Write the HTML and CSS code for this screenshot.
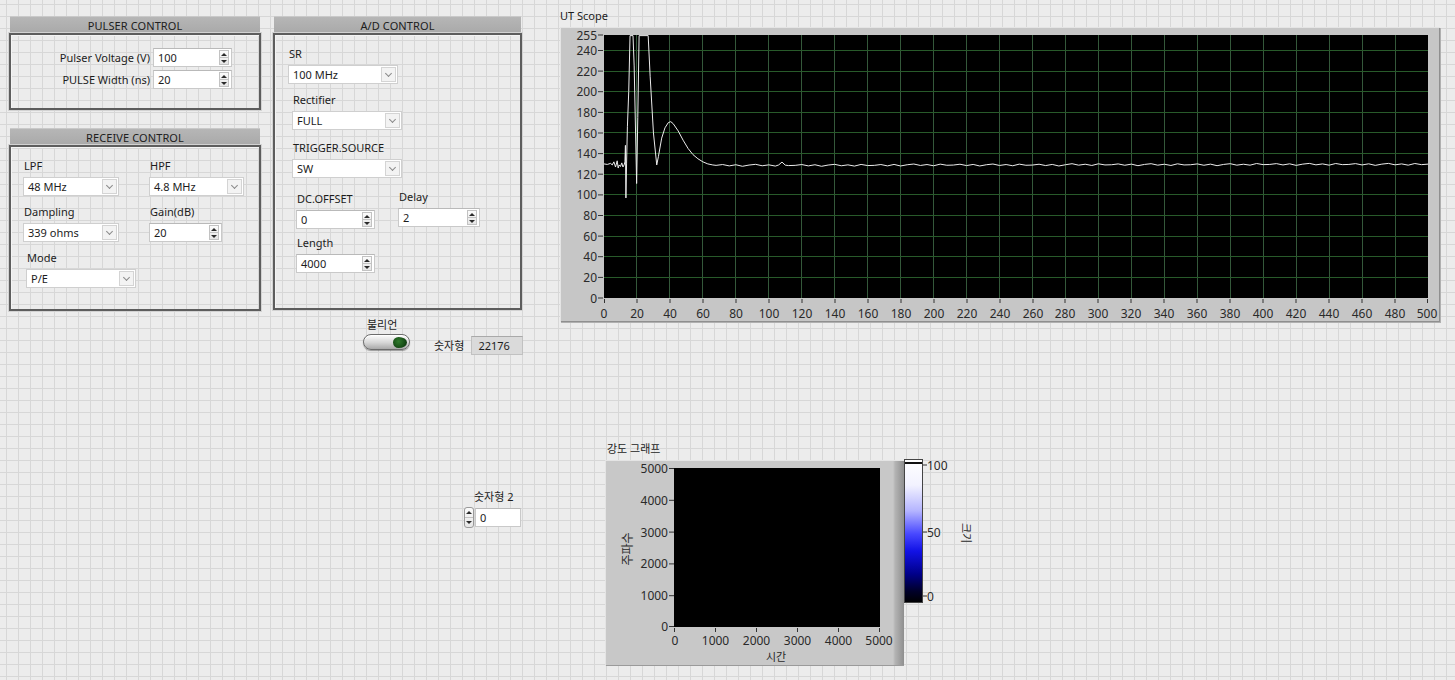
FILE: index.html
```html
<!DOCTYPE html>
<html lang="ko">
<head>
<meta charset="utf-8">
<title>UT Front Panel</title>
<link rel="stylesheet" href="styles.css">
</head>
<body>
<main class="panel">

  <section class="cluster pulser">
    <div class="cluster-title">PULSER CONTROL</div>
    <div class="cluster-body pulser-body">
      <span class="lbl right">Pulser Voltage (V)</span>
      <div class="num w79"><span class="val">100</span><span class="spin"><i class="up"></i><i class="dn"></i></span></div>
      <span class="lbl right">PULSE Width (ns)</span>
      <div class="num w79"><span class="val">20</span><span class="spin"><i class="up"></i><i class="dn"></i></span></div>
    </div>
  </section>

  <section class="cluster receive">
    <div class="cluster-title">RECEIVE CONTROL</div>
    <div class="cluster-body receive-body">
      <div class="field">
        <span class="lbl">LPF</span>
        <div class="ring w96"><span class="val">48 MHz</span><span class="arrow"></span></div>
      </div>
      <div class="field">
        <span class="lbl">HPF</span>
        <div class="ring w95"><span class="val">4.8 MHz</span><span class="arrow"></span></div>
      </div>
      <div class="field">
        <span class="lbl">Dampling</span>
        <div class="ring w96"><span class="val">339 ohms</span><span class="arrow"></span></div>
      </div>
      <div class="field">
        <span class="lbl">Gain(dB)</span>
        <div class="num w73"><span class="val">20</span><span class="spin"><i class="up"></i><i class="dn"></i></span></div>
      </div>
      <div class="field mode">
        <span class="lbl">Mode</span>
        <div class="ring w110"><span class="val">P/E</span><span class="arrow"></span></div>
      </div>
    </div>
  </section>

  <section class="cluster adc">
    <div class="cluster-title">A/D CONTROL</div>
    <div class="cluster-body adc-body">
      <div class="field f-sr">
        <span class="lbl">SR</span>
        <div class="ring w110"><span class="val">100 MHz</span><span class="arrow"></span></div>
      </div>
      <div class="field f-rect">
        <span class="lbl">Rectifier</span>
        <div class="ring w110"><span class="val">FULL</span><span class="arrow"></span></div>
      </div>
      <div class="field f-trig">
        <span class="lbl">TRIGGER.SOURCE</span>
        <div class="ring w110"><span class="val">SW</span><span class="arrow"></span></div>
      </div>
      <div class="pair">
        <div class="field">
          <span class="lbl">DC.OFFSET</span>
          <div class="num w79"><span class="val">0</span><span class="spin"><i class="up"></i><i class="dn"></i></span></div>
        </div>
        <div class="field f-delay">
          <span class="lbl">Delay</span>
          <div class="num w82"><span class="val">2</span><span class="spin"><i class="up"></i><i class="dn"></i></span></div>
        </div>
      </div>
      <div class="field f-len">
        <span class="lbl">Length</span>
        <div class="num w79"><span class="val">4000</span><span class="spin"><i class="up"></i><i class="dn"></i></span></div>
      </div>
    </div>
  </section>

  <div class="boolean">
    <span class="lbl">불리언</span>
    <div class="bool-btn"><span class="led"></span></div>
  </div>

  <div class="indicator">
    <span class="lbl">숫자형</span>
    <div class="ind-box">22176</div>
  </div>

  <div class="numeric2">
    <span class="lbl">숫자형 2</span>
    <div class="num2-row">
      <span class="spin spin-left"><i class="up"></i><i class="dn"></i></span>
      <div class="num w46"><span class="val">0</span></div>
    </div>
  </div>

  <section class="scope">
    <div class="graph-title">UT Scope</div>
    <div class="scope-frame">
      <svg class="graph-svg" width="880" height="295" viewBox="0 0 880 295">
        <rect x="44" y="8" width="824" height="263" fill="#000"/>
        <svg x="44" y="8" width="824" height="263" viewBox="0 0 500 255" preserveAspectRatio="none">
          <path class="gridv" vector-effect="non-scaling-stroke" shape-rendering="crispEdges" d="M20 0V255M40 0V255M60 0V255M80 0V255M100 0V255M120 0V255M140 0V255M160 0V255M180 0V255M200 0V255M220 0V255M240 0V255M260 0V255M280 0V255M300 0V255M320 0V255M340 0V255M360 0V255M380 0V255M400 0V255M420 0V255M440 0V255M460 0V255M480 0V255"/>
          <path class="gridh" vector-effect="non-scaling-stroke" shape-rendering="crispEdges" d="M0 235H500M0 215H500M0 195H500M0 175H500M0 155H500M0 135H500M0 115H500M0 95H500M0 75H500M0 55H500M0 35H500M0 15H500"/>
          <polyline class="trace" vector-effect="non-scaling-stroke" points="0,125 2,125.5 4,124.5 5,126 6,123 7,128 8,122 8.6,129 9.2,126 10,127.5 10.8,124 11.5,128 12.2,126 12.7,123 13,107 13.3,158 13.7,125 14.2,89 15,55 15.8,0.6 17.6,0.6 18.3,30 19.8,144 20.5,80 21.3,0.6 26.8,0.6 28,40 30,95 32,126 33,118 35,100 37,90 39,85 40.5,84 42,86 45,93 48,102 51,110 54,116 57,120 60,123 63,125 66,126 68,126.4 72,125.6 76,126.9 80,125.8 84,127.3 88,126.1 92,125.4 96,126.8 100,125.9 104,127.1 106,126 108,123.2 110,126.2 112,126.6 116,126.4 120,125.6 124,126.9 128,125.8 132,127.3 136,126.1 140,125.4 144,126.8 148,125.9 152,127.1 156,125.5 160,126.6 164,126.4 168,125.6 172,126.9 176,125.5 180,127 184,125.8 188,125.1 192,126.5 196,125.6 200,126.8 204,125.2 208,126.3 212,126.1 216,125.3 220,126.6 224,125.5 228,127 232,125.8 236,125.1 240,126.5 244,125.6 248,126.8 252,125.2 256,126.3 260,126.1 264,125.3 268,126.6 272,125.5 276,127 280,125.8 284,124.8 288,126.2 292,125.3 296,126.5 300,124.9 304,126 308,125.8 312,125 316,126.3 320,125.2 324,126.7 328,125.5 332,124.8 336,126.2 340,125.3 344,126.5 348,124.9 352,126 356,125.8 360,125 364,126.3 368,125.2 372,126.7 376,125.5 380,124.8 384,126.2 388,125.3 392,126.2 396,124.6 400,125.7 404,125.5 408,124.7 412,126 416,124.9 420,126.4 424,125.2 428,124.5 432,125.9 436,125 440,126.2 444,124.6 448,125.7 452,125.5 456,124.7 460,126 464,124.9 468,126.4 472,125.2 476,124.5 480,125.9 484,125 488,126.2 492,124.6 496,125.7 500,125.2"/>
        </svg>
        <path class="tick" d="M38 271H43M38 250.4H43M38 229.7H43M38 209.1H43M38 188.5H43M38 167.9H43M38 147.2H43M38 126.6H43M38 106H43M38 85.4H43M38 64.7H43M38 44.1H43M38 23.5H43M38 8H43"/>
        <g class="axis-y">
          <text x="37" y="271">0</text>
          <text x="37" y="250.4">20</text>
          <text x="37" y="229.7">40</text>
          <text x="37" y="209.1">60</text>
          <text x="37" y="188.5">80</text>
          <text x="37" y="167.9">100</text>
          <text x="37" y="147.2">120</text>
          <text x="37" y="126.6">140</text>
          <text x="37" y="106">160</text>
          <text x="37" y="85.4">180</text>
          <text x="37" y="64.7">200</text>
          <text x="37" y="44.1">220</text>
          <text x="37" y="23.5">240</text>
          <text x="37" y="8">255</text>
        </g>
        <path class="tick" d="M44.5 272V276M77 272V276M110 272V276M143 272V276M176 272V276M209 272V276M242 272V276M275 272V276M308 272V276M341 272V276M374 272V276M407 272V276M440 272V276M473 272V276M505 272V276M538 272V276M571 272V276M604 272V276M637 272V276M670 272V276M703 272V276M736 272V276M769 272V276M802 272V276M835 272V276M867.5 272V276"/>
        <g class="axis-x">
          <text x="44" y="286">0</text>
          <text x="77" y="286">20</text>
          <text x="110" y="286">40</text>
          <text x="143" y="286">60</text>
          <text x="176" y="286">80</text>
          <text x="209" y="286">100</text>
          <text x="242" y="286">120</text>
          <text x="275" y="286">140</text>
          <text x="308" y="286">160</text>
          <text x="341" y="286">180</text>
          <text x="374" y="286">200</text>
          <text x="407" y="286">220</text>
          <text x="440" y="286">240</text>
          <text x="473" y="286">260</text>
          <text x="505" y="286">280</text>
          <text x="538" y="286">300</text>
          <text x="571" y="286">320</text>
          <text x="604" y="286">340</text>
          <text x="637" y="286">360</text>
          <text x="670" y="286">380</text>
          <text x="703" y="286">400</text>
          <text x="736" y="286">420</text>
          <text x="769" y="286">440</text>
          <text x="802" y="286">460</text>
          <text x="835" y="286">480</text>
          <text x="867" y="286">500</text>
        </g>
      </svg>
    </div>
  </section>

  <section class="intensity">
    <div class="graph-title">강도 그래프</div>
    <div class="int-row">
      <div class="int-frame">
        <svg class="graph-svg" width="299" height="206" viewBox="0 0 299 206">
          <rect x="69" y="8" width="206" height="159" fill="#000"/>
          <path class="tick" d="M64 8.5H69M64 40.3H69M64 72.1H69M64 103.9H69M64 135.7H69M64 166.5H69"/>
          <g class="axis-y">
            <text x="63" y="8.5">5000</text>
            <text x="63" y="40.3">4000</text>
            <text x="63" y="72.1">3000</text>
            <text x="63" y="103.9">2000</text>
            <text x="63" y="135.7">1000</text>
            <text x="63" y="166.5">0</text>
          </g>
          <path class="tick" d="M69.5 168V172M110.5 168V172M151.5 168V172M192.5 168V172M233.5 168V172M274.5 168V172"/>
          <g class="axis-x">
            <text x="70" y="180">0</text>
            <text x="110.5" y="180">1000</text>
            <text x="151.5" y="180">2000</text>
            <text x="192.5" y="180">3000</text>
            <text x="233.5" y="180">4000</text>
            <text x="274" y="180">5000</text>
          </g>
          <text class="axis-name" x="171" y="196">시간</text>
          <text class="axis-name big" transform="translate(22 89) rotate(-90)">주파수</text>
        </svg>
      </div>
      <svg class="colorscale" width="80" height="156" viewBox="0 0 80 156">
        <defs>
          <linearGradient id="cs" x1="0" y1="0" x2="0" y2="1">
            <stop offset="0" stop-color="#ffffff"/>
            <stop offset="0.18" stop-color="#f2f2ff"/>
            <stop offset="0.36" stop-color="#b4b4ff"/>
            <stop offset="0.52" stop-color="#4848ff"/>
            <stop offset="0.64" stop-color="#1212e6"/>
            <stop offset="0.8" stop-color="#00008a"/>
            <stop offset="0.92" stop-color="#00002a"/>
            <stop offset="1" stop-color="#000000"/>
          </linearGradient>
        </defs>
        <g transform="translate(0 6)">
          <rect x="0.5" y="0.5" width="18" height="143" fill="url(#cs)" stroke="#444"/>
          <rect x="1" y="3" width="17" height="2" fill="#111"/>
          <path class="tick" d="M19 6H23M19 73H23M19 137H23"/>
          <g class="scale-lbl">
            <text x="23" y="6">100</text>
            <text x="23" y="73">50</text>
            <text x="23" y="137">0</text>
          </g>
          <text class="axis-name" transform="translate(62 74) rotate(90)">크기</text>
        </g>
      </svg>
    </div>
  </section>

</main>
</body>
</html>
```

FILE: styles.css
```css
html, body {
  margin: 0;
  padding: 0;
}

body {
  width: 1455px;
  height: 680px;
  overflow: hidden;
  background-color: #ececec;
  background-image:
    linear-gradient(to right, #d7d7d7 1px, transparent 1px),
    linear-gradient(to bottom, #d7d7d7 1px, transparent 1px);
  background-size: 12px 12px;
  background-position: 6px 4px;
  font-family: "Noto Sans", "Noto Sans CJK KR", sans-serif;
  font-size: 11px;
  color: #1c1c1c;
}

.panel {
  position: relative;
  width: 1455px;
  height: 680px;
}

/* ---------- clusters ---------- */
.cluster {
  position: absolute;
  box-sizing: border-box;
}

.pulser  { left: 9px;   top: 16px;  width: 252px; }
.receive { left: 9px;   top: 128px; width: 252px; }
.adc     { left: 273px; top: 16px;  width: 249px; }

.cluster-title {
  height: 17px;
  line-height: 17px;
  margin: 0 1px;
  background: linear-gradient(#b6b6b6, #a9a9a9);
  border-top: 1px solid #c9c9c9;
  box-sizing: border-box;
  text-align: center;
  color: #202020;
  letter-spacing: 0.1px;
}

.cluster-body {
  box-sizing: border-box;
  border: 2px solid #5d5d5d;
  box-shadow: inset 1px 1px 0 #f4f4f4, 0 0 0 1px #d2d2d2;
}

.pulser-body {
  height: 77px;
  display: grid;
  grid-template-columns: 139px 79px;
  grid-auto-rows: 19px;
  column-gap: 3px;
  row-gap: 3px;
  align-items: center;
  padding-top: 13px;
}

.receive-body {
  height: 166px;
  display: grid;
  grid-template-columns: 126px 100px;
  row-gap: 9px;
  align-content: start;
  padding: 12px 0 0 12px;
}

.adc-body {
  height: 277px;
  display: flex;
  flex-direction: column;
  align-items: flex-start;
  padding: 12px 0 0 13px;
}

/* ---------- labels / fields ---------- */
.lbl {
  display: block;
  line-height: 14px;
  white-space: nowrap;
}

.lbl.right {
  text-align: right;
}

.field {
  display: flex;
  flex-direction: column;
  align-items: flex-start;
}

.field .lbl {
  margin-bottom: 4px;
  padding-left: 1px;
}

.receive-body .mode {
  margin-left: 3px;
}

.f-rect { margin-top: 9px;  margin-left: 4px; }
.f-trig { margin-top: 11px; margin-left: 4px; }
.f-len  { margin-top: 7px;  margin-left: 8px; }

.pair {
  display: flex;
  align-items: flex-start;
  gap: 23px;
  margin-top: 14px;
  margin-left: 8px;
}

.f-delay {
  margin-top: -2px;
}

/* ---------- numeric control ---------- */
.num {
  display: flex;
  align-items: center;
  height: 19px;
  box-sizing: border-box;
  background: #ffffff;
  border: 1px solid #c9c9c9;
  border-top-color: #b9b9b9;
}

.num .val,
.ring .val {
  flex: 1;
  padding-left: 4px;
  line-height: 17px;
  white-space: nowrap;
}

.w46  { width: 46px; }
.w73  { width: 73px; }
.w79  { width: 79px; }
.w82  { width: 82px; }
.w95  { width: 95px; }
.w96  { width: 96px; }
.w110 { width: 110px; }

.spin {
  display: flex;
  flex-direction: column;
  width: 10px;
  height: 15px;
  margin-right: 2px;
  box-sizing: border-box;
  border: 1px solid #c2c2c2;
  background: linear-gradient(#fbfbfb, #e6e6e6);
}

.spin i {
  flex: 1;
  display: flex;
  align-items: center;
  justify-content: center;
}

.spin .dn {
  border-top: 1px solid #c2c2c2;
}

.spin i::before {
  content: "";
  border-left: 3px solid transparent;
  border-right: 3px solid transparent;
}

.spin .up::before { border-bottom: 3px solid #2a2a2a; }
.spin .dn::before { border-top: 3px solid #2a2a2a; }

/* ---------- ring (dropdown) ---------- */
.ring {
  display: flex;
  align-items: center;
  height: 19px;
  box-sizing: border-box;
  background: #ffffff;
  border: 1px solid #cfcfcf;
}

.ring .arrow {
  width: 15px;
  height: 15px;
  margin-right: 1px;
  box-sizing: border-box;
  border: 1px solid #d4d4d4;
  background: #f3f3f3;
  display: flex;
  align-items: center;
  justify-content: center;
}

.ring .arrow::before {
  content: "";
  width: 4px;
  height: 4px;
  margin-top: -3px;
  border-right: 1px solid #8a8a8a;
  border-bottom: 1px solid #8a8a8a;
  transform: rotate(45deg);
}

/* ---------- boolean ---------- */
.boolean {
  position: absolute;
  left: 363px;
  top: 318px;
  display: flex;
  flex-direction: column;
  align-items: flex-start;
  gap: 2px;
}

.boolean .lbl {
  margin-left: 4px;
}

.bool-btn {
  width: 47px;
  height: 16px;
  box-sizing: border-box;
  border-radius: 8px;
  border: 1px solid #6c6c6c;
  background: linear-gradient(#fdfdfd 0%, #d6d6d6 55%, #a9a9a9 100%);
  box-shadow: 0 1px 1px rgba(0, 0, 0, 0.35), inset 0 1px 0 #ffffff;
  display: flex;
  align-items: center;
  justify-content: flex-end;
  padding-right: 2px;
}

.led {
  width: 14px;
  height: 11px;
  border-radius: 40% 60% 60% 40% / 50%;
  background: radial-gradient(circle at 40% 40%, #2f7a2c, #124412 70%, #0a2a0a);
}

/* ---------- numeric indicator ---------- */
.indicator {
  position: absolute;
  left: 434px;
  top: 336px;
  display: flex;
  align-items: center;
  gap: 7px;
}

.ind-box {
  width: 52px;
  height: 19px;
  line-height: 17px;
  box-sizing: border-box;
  padding-left: 6px;
  background: #dadada;
  border: 1px solid #c1c1c1;
  border-top-color: #a9a9a9;
}

/* ---------- numeric 2 ---------- */
.numeric2 {
  position: absolute;
  left: 464px;
  top: 490px;
  display: flex;
  flex-direction: column;
  align-items: flex-start;
  gap: 3px;
}

.numeric2 .lbl {
  margin-left: 10px;
}

.num2-row {
  display: flex;
  align-items: center;
  gap: 1px;
}

.spin-left {
  width: 10px;
  height: 21px;
  margin: 0;
  border-radius: 3px;
  border-color: #9a9a9a;
}

/* ---------- graphs ---------- */
.graph-title {
  line-height: 14px;
  white-space: nowrap;
}

.scope {
  position: absolute;
  left: 560px;
  top: 9px;
  display: flex;
  flex-direction: column;
  gap: 4px;
}

.scope-frame {
  width: 880px;
  height: 295px;
  background: #c6c6c6;
  box-shadow: inset 1px 1px 0 #e4e4e4, inset -1px -1px 0 #8f8f8f, 1px 1px 0 #b0b0b0;
}

.graph-svg {
  display: block;
  font-family: "Noto Sans", "Noto Sans CJK KR", sans-serif;
}

.gridv {
  stroke: #34583a;
  stroke-width: 1;
  fill: none;
}

.gridh {
  stroke: #285a2a;
  stroke-width: 1;
  fill: none;
}

.trace {
  fill: none;
  stroke: #ececec;
  stroke-width: 1;
}

.tick {
  stroke: #333;
  stroke-width: 1;
  fill: none;
}

.axis-y text {
  font-size: 12px;
  fill: #2a2a2a;
  text-anchor: end;
  dominant-baseline: central;
}

.axis-x text {
  font-size: 12px;
  fill: #2a2a2a;
  text-anchor: middle;
  dominant-baseline: central;
}

.axis-name {
  font-size: 11px;
  fill: #2a2a2a;
  text-anchor: middle;
  dominant-baseline: central;
}

.axis-name.big {
  font-size: 12px;
}

.intensity {
  position: absolute;
  left: 605px;
  top: 442px;
  display: flex;
  flex-direction: column;
  gap: 4px;
}

.intensity .graph-title {
  margin-left: 2px;
}

.int-row {
  display: flex;
  align-items: flex-start;
}

.int-frame {
  width: 299px;
  height: 206px;
  background: linear-gradient(to right, #c8c8c8 0, #c8c8c8 288px, #b4b4b4 290px, #8f8f8f 299px);
  box-shadow: inset 1px 1px 0 #e4e4e4, inset 0 -1px 0 #9a9a9a;
}

.colorscale {
  display: block;
  margin-top: -7px;
  font-family: "Noto Sans", "Noto Sans CJK KR", sans-serif;
}

.scale-lbl text {
  font-size: 12px;
  fill: #2a2a2a;
  dominant-baseline: central;
}
```
